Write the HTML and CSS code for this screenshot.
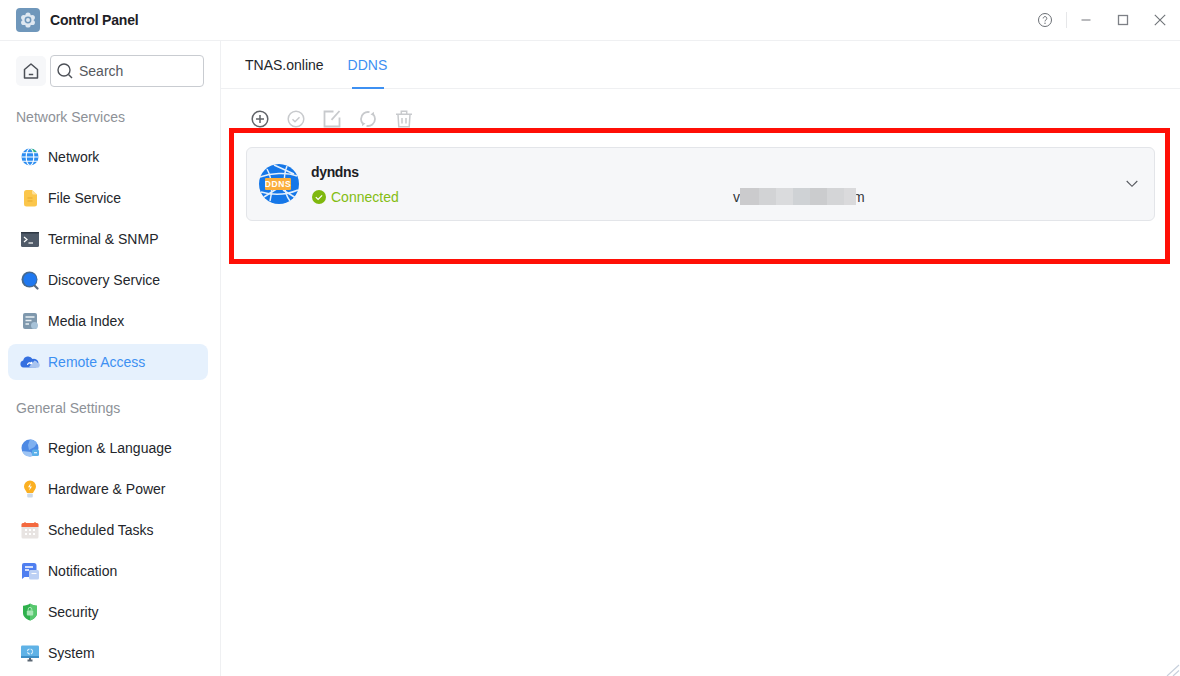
FILE: index.html
```html
<!DOCTYPE html>
<html lang="en">
<head>
<meta charset="utf-8">
<title>Control Panel</title>
<link rel="stylesheet" href="styles.css">
</head>
<body>
<div class="window">
  <header class="titlebar">
    <div class="app-logo">
      <svg viewBox="0 0 24 24" width="24" height="24"><rect width="24" height="24" rx="4" fill="#6f97bb"/><g fill="#dfe8f1"><circle cx="12" cy="12" r="5.500"/><circle cx="12" cy="7" r="2.600"/><circle cx="12" cy="17" r="2.600"/><circle cx="7.700" cy="9.500" r="2.600"/><circle cx="16.300" cy="9.500" r="2.600"/><circle cx="7.700" cy="14.500" r="2.600"/><circle cx="16.300" cy="14.500" r="2.600"/></g><circle cx="12" cy="12" r="2.700" fill="#dfe8f1" stroke="#6f97bb" stroke-width="1.500"/></svg>
    </div>
    <span class="app-title">Control Panel</span>
    <div class="win-controls">
      <svg class="ctl ctl-help" viewBox="0 0 16 16" width="16" height="16"><circle cx="8" cy="8" r="6.500" fill="none" stroke="#6b6f75" stroke-width="1"/><path d="M6.200 6.400a1.800 1.800 0 1 1 2.800 1.500c-.7.400-1 .8-1 1.500" fill="none" stroke="#6b6f75" stroke-width="1"/><circle cx="8" cy="11.300" r=".7" fill="#6b6f75"/></svg>
      <span class="ctl-sep"></span>
      <svg class="ctl" viewBox="0 0 12 12" width="12" height="12"><path d="M1.500 6h9" stroke="#8a8d92" stroke-width="1.200"/></svg>
      <svg class="ctl" viewBox="0 0 12 12" width="12" height="12"><rect x="1.500" y="1.500" width="9" height="9" fill="none" stroke="#7d8086" stroke-width="1.300"/></svg>
      <svg class="ctl" viewBox="0 0 12 12" width="12" height="12"><path d="M.8.800l10.400 10.400M11.200.800L.8 11.200" stroke="#6f7378" stroke-width="1.100"/></svg>
    </div>
  </header>

  <div class="body">
    <aside class="sidebar">
      <div class="search-row">
        <button class="home-btn" type="button">
          <svg viewBox="0 0 18 18" width="18" height="18"><path d="M2.500 7.500L9 2l6.500 5.500V16h-13z" fill="none" stroke="#4c5057" stroke-width="1.500" stroke-linejoin="round"/><path d="M6.800 12.500h4.400" stroke="#4c5057" stroke-width="1.500"/></svg>
        </button>
        <div class="search">
          <svg viewBox="0 0 18 18" width="18" height="18"><circle cx="8" cy="8" r="6" fill="none" stroke="#4c5057" stroke-width="1.400"/><path d="M12.500 12.500l3.500 3.500" stroke="#4c5057" stroke-width="1.400"/></svg>
          <span>Search</span>
        </div>
      </div>

      <div class="section-title first">Network Services</div>
      <nav class="nav">
        <a class="nav-item">
          <svg viewBox="0 0 20 20" width="20" height="20"><circle cx="10" cy="10" r="8.500" fill="#2b8cf0"/><path d="M10 1.500a8.500 8.500 0 0 1 6.500 3L13 6z" fill="#2fb67c"/><ellipse cx="10" cy="10" rx="3.800" ry="8.500" fill="none" stroke="#fff" stroke-width="1.100"/><path d="M1.500 10h17M3 5.800h14M3 14.200h14" stroke="#fff" stroke-width="1.100"/></svg>
          <span>Network</span>
        </a>
        <a class="nav-item">
          <svg viewBox="0 0 20 20" width="20" height="20"><path d="M4 4.500a2.500 2.500 0 0 1 2.500-2.500H12l5 4.500v9.500a2.500 2.500 0 0 1-2.500 2.500h-8A2.500 2.500 0 0 1 4 16z" fill="#fbc64b"/><path d="M12 2l5 4.500h-3.500A1.500 1.500 0 0 1 12 5z" fill="#fde09a"/><path d="M7.500 10h5M7.500 13h5" stroke="#e6a92c" stroke-width="1"/></svg>
          <span>File Service</span>
        </a>
        <a class="nav-item">
          <svg viewBox="0 0 20 20" width="20" height="20"><rect x="1" y="3" width="18" height="15" rx="1.500" fill="#4f5a68"/><rect x="1" y="3" width="18" height="1.500" fill="#2f3844"/><path d="M4 8l3 2.500L4 13" fill="none" stroke="#fff" stroke-width="1.200"/><path d="M8.500 14h4.500" stroke="#fff" stroke-width="1.200"/></svg>
          <span>Terminal &amp; SNMP</span>
        </a>
        <a class="nav-item">
          <svg viewBox="0 0 20 20" width="20" height="20"><path d="M14 15l3.500 3.500" stroke="#5d6b7c" stroke-width="2.200" stroke-linecap="round"/><circle cx="9.500" cy="9.500" r="8" fill="#46698f"/><circle cx="10" cy="9.500" r="6.600" fill="#1f78f0"/></svg>
          <span>Discovery Service</span>
        </a>
        <a class="nav-item">
          <svg viewBox="0 0 20 20" width="20" height="20"><rect x="3" y="2" width="14" height="16" rx="2" fill="#7f98ad"/><path d="M5.500 6h9M5.500 9.500h6M5.500 13h3.500" stroke="#e9eff4" stroke-width="1.300"/><circle cx="14.500" cy="14.500" r="3.500" fill="#a7c2d8"/></svg>
          <span>Media Index</span>
        </a>
        <a class="nav-item active">
          <svg viewBox="0 0 20 20" width="20" height="20"><path d="M3.500 15.500a3.500 3.500 0 0 1-.3-6.900A5 5 0 0 1 12.500 7a4.200 4.200 0 0 1 3 8.500z" fill="#3570e0"/><path d="M12 15.800h5a2.500 2.500 0 0 0 .5-5 3.800 3.800 0 0 0-3-2.400L9 15z" fill="#a9c4ef"/><path d="M7.500 13a2.500 2.500 0 0 1 4.300-1.500M11.800 9.800v2h-2" fill="none" stroke="#fff" stroke-width="1.100"/></svg>
          <span>Remote Access</span>
        </a>
      </nav>

      <div class="section-title">General Settings</div>
      <nav class="nav">
        <a class="nav-item">
          <svg viewBox="0 0 20 20" width="20" height="20"><circle cx="10" cy="10" r="8.500" fill="#4d89e4"/><path d="M10 1.500a8.500 8.500 0 0 1 7 3.700L14.500 9 9 12l-1-5z" fill="#7fb0f0"/><path d="M2 13a8.500 8.500 0 0 0 8 5.500c1 0 2-.2 3-.5l-2-4z" fill="#9dc4f4"/><rect x="12" y="11.500" width="7" height="6.500" rx="1.500" fill="#5bb0ea"/><path d="M14 14.700h3" stroke="#e8f3fc" stroke-width="1.200"/></svg>
          <span>Region &amp; Language</span>
        </a>
        <a class="nav-item">
          <svg viewBox="0 0 20 20" width="20" height="20"><path d="M10 1.500a6 6 0 0 1 6 6c0 2.600-2 4-3 6.500H7c-1-2.500-3-3.900-3-6.500a6 6 0 0 1 6-6z" fill="#fbb022"/><path d="M10.800 4L8 8.300h2l-.8 3.200L12 7.500h-2z" fill="#fff"/><rect x="7.200" y="14.500" width="5.600" height="4" rx="1" fill="#cdd9e6"/></svg>
          <span>Hardware &amp; Power</span>
        </a>
        <a class="nav-item">
          <svg viewBox="0 0 20 20" width="20" height="20"><rect x="1.500" y="3" width="17" height="15.500" rx="1.500" fill="#e8e4e2"/><path d="M1.500 4.500A1.500 1.500 0 0 1 3 3h14a1.500 1.500 0 0 1 1.500 1.500V7h-17z" fill="#f4693f"/><path d="M5 2v2M15 2v2" stroke="#f4693f" stroke-width="1.200"/><path d="M5 10h2M9 10h2M13 10h2M5 14h2M9 14h2M13 14h2" stroke="#fff" stroke-width="1.800"/></svg>
          <span>Scheduled Tasks</span>
        </a>
        <a class="nav-item">
          <svg viewBox="0 0 20 20" width="20" height="20"><path d="M4 2h10a2.500 2.500 0 0 1 2.500 2.500V16H4.500L2 18V4a2 2 0 0 1 2-2z" fill="#4f7ff0"/><path d="M5 6h8M5 9h4" stroke="#fff" stroke-width="1.300"/><rect x="9" y="9" width="10" height="9.500" rx="1.500" fill="#bcd0f4"/><path d="M11.500 12.500h5" stroke="#fff" stroke-width="1.100"/></svg>
          <span>Notification</span>
        </a>
        <a class="nav-item">
          <svg viewBox="0 0 20 20" width="20" height="20"><path d="M10 1.500c2 1.400 4.300 2.100 7 2.200v7.300c0 3.500-3 6-7 7.500-4-1.500-7-4-7-7.500V3.700c2.700-.1 5-.8 7-2.200z" fill="#2fb14c"/><path d="M10 1.500c2 1.400 4.300 2.100 7 2.200v7.300c0 3.500-3 6-7 7.500z" fill="#58c86e"/><rect x="6.800" y="8.500" width="6.400" height="5" rx="1" fill="#a9e6b6"/><path d="M8.200 8.500V7.200a1.800 1.800 0 0 1 3.600 0v1.300" fill="none" stroke="#a9e6b6" stroke-width="1"/></svg>
          <span>Security</span>
        </a>
        <a class="nav-item">
          <svg viewBox="0 0 20 20" width="20" height="20"><rect x="1" y="2.500" width="18" height="12.500" rx="1.200" fill="#5fb2e6"/><rect x="1" y="13" width="18" height="2" fill="#3d8ec6"/><path d="M7.500 17.500h5" stroke="#5b6672" stroke-width="2"/><path d="M9 15h2v2H9z" fill="#5b6672"/><circle cx="10" cy="8.500" r="2.600" fill="none" stroke="#dff1fb" stroke-width="1.100" stroke-dasharray="3 1.200"/></svg>
          <span>System</span>
        </a>
      </nav>
    </aside>

    <main class="content">
      <div class="tabs">
        <span class="tab">TNAS.online</span>
        <span class="tab current">DDNS</span>
      </div>

      <div class="toolbar">
        <svg viewBox="0 0 18 18" width="18" height="18"><circle cx="9" cy="9" r="7.800" fill="none" stroke="#606368" stroke-width="1.500"/><path d="M9 5v8M5 9h8" stroke="#606368" stroke-width="1.500"/></svg>
        <svg viewBox="0 0 18 18" width="18" height="18"><circle cx="9" cy="9" r="7.800" fill="none" stroke="#c8cacd" stroke-width="1.500"/><path d="M5.500 9.200l2.500 2.500 4.500-4.500" fill="none" stroke="#c8cacd" stroke-width="1.500"/></svg>
        <svg viewBox="0 0 18 18" width="18" height="18"><path d="M10.500 1.500H1.500v15h15V7.500" fill="none" stroke="#c8cacd" stroke-width="1.800"/><path d="M16.500 1L8.500 9.800" stroke="#c8cacd" stroke-width="1.800"/></svg>
        <svg viewBox="0 0 18 18" width="18" height="18"><path d="M10.500 2.200A7 7 0 0 0 2 9c0 1.800.7 3.400 1.800 4.600M7.500 15.800A7 7 0 0 0 16 9c0-1.800-.7-3.400-1.800-4.600" fill="none" stroke="#c8cacd" stroke-width="1.800"/><path d="M11.500 4.500L14.800 1.800l.4 4.200zM6.500 13.500L3.200 16.200l-.4-4.200z" fill="#c8cacd"/></svg>
        <svg viewBox="0 0 18 18" width="18" height="18"><path d="M1 4.200h16M6.300 4V1.200h5.400V4M3 4.500l.8 12.300h10.400l.8-12.300M7 8v5.500M11 8v5.500" fill="none" stroke="#c8cacd" stroke-width="1.500"/></svg>
      </div>

      <section class="card">
        <svg class="ddns-logo" viewBox="0 0 40 40" width="40" height="40"><circle cx="20" cy="20" r="20" fill="#1577e8"/><path d="M8 5c5 9 6 22 3 32M28 2c-4 10-4 26 3 35M1 13c11-4 27-5 37-1M2 28c11 3 25 3 37-2M15 1l20 9M5 33l14-9M24 26l13 8" fill="none" stroke="#e3effc" stroke-width="1.500"/><rect x="6" y="14" width="26" height="12" rx="1" fill="#fbae3c"/><text x="19" y="23.200" class="ddns-text" text-anchor="middle">DDNS</text></svg>
        <div class="card-info">
          <div class="card-name">dyndns</div>
          <div class="card-row">
            <div class="status">
              <svg viewBox="0 0 14 14" width="14" height="14"><circle cx="7" cy="7" r="7" fill="#7fb80e"/><path d="M3.800 7.200l2.300 2.300 4-4.200" fill="none" stroke="#fff" stroke-width="1.200"/></svg>
              <span>Connected</span>
            </div>
            <div class="address"><span>v</span><span class="blur"><i class="b1"></i><i class="b2"></i><i class="b3"></i><i class="b4"></i><i class="b5"></i><i class="b6"></i><i class="b7"></i></span><span class="addr-end">m</span></div>
          </div>
        </div>
        <svg class="chevron" viewBox="0 0 12 8" width="12" height="8"><path d="M.7 1l5.300 5.300L11.300 1" fill="none" stroke="#55585e" stroke-width="1.100"/></svg>
      </section>
    </main>
  </div>

  <div class="highlight"></div>
  <svg class="grip" viewBox="0 0 14 12" width="14" height="12"><path d="M1 12L13 1M7 12l6-5.500" stroke="#c7d0dc" stroke-width="1.200"/></svg>
</div>
</body>
</html>
```

FILE: styles.css
```css
* { box-sizing: border-box; }
html, body { margin: 0; height: 100%; background: #fff; }
body { font-family: "Liberation Sans", Arial, sans-serif; font-size: 14px; color: #23262b; overflow: hidden; }
svg { display: block; flex: none; }

.window { position: relative; width: 1180px; height: 676px; display: flex; flex-direction: column; background: #fff; overflow: hidden; }

.titlebar { height: 41px; flex: none; display: flex; align-items: center; padding: 0 14px 1px 16px; border-bottom: 1px solid #eff0f2; }
.app-logo { width: 24px; height: 24px; margin-right: 10px; }
.app-title { font-weight: 700; font-size: 14px; color: #1d2025; letter-spacing: -0.2px; }
.win-controls { margin-left: auto; display: flex; align-items: center; gap: 25px; }
.ctl-help { margin-right: -12px; }
.ctl-sep { width: 1px; height: 16px; background: #e6e7e9; margin-right: -12px; }

.body { flex: 1; display: flex; min-height: 0; }

.sidebar { width: 221px; flex: none; border-right: 1px solid #eff0f2; padding: 14px 12px 0 8px; }
.search-row { display: flex; align-items: center; gap: 4px; padding-left: 8px; height: 32px; }
.home-btn { width: 30px; height: 30px; border: 0; padding: 0; background: #f6f7f9; border-radius: 5px; display: flex; align-items: center; justify-content: center; }
.search { width: 154px; height: 32px; border: 1px solid #c9ccd1; border-radius: 4px; display: flex; align-items: center; gap: 5px; padding-left: 5px; color: #55585e; }

.section-title { height: 20px; line-height: 20px; color: #8d9197; padding-left: 8px; margin: 18px 0 12px; }
.section-title.first { margin-top: 20px; }

.nav { display: flex; flex-direction: column; gap: 5px; }
.nav-item { height: 36px; display: flex; align-items: center; gap: 8px; padding-left: 12px; border-radius: 8px; color: #23262b; }
.nav-item.active { background: #e6f1fd; color: #3d90f2; }

.content { flex: 1; min-width: 0; padding: 0; }
.tabs { height: 48px; border-bottom: 1px solid #eff0f2; display: flex; gap: 24px; padding-left: 24px; }
.tab { position: relative; height: 48px; line-height: 49px; color: #23262b; }
.tab.current { color: #3d90f2; }
.tab.current::after { content: ""; position: absolute; left: 4px; right: 3px; bottom: 0; height: 2px; background: #3d90f2; }

.toolbar { display: flex; gap: 18px; padding: 21px 0 0 30px; height: 58px; }

.card { margin-left: 25px; width: 909px; height: 74px; display: flex; align-items: center; background: #f6f7f9; border: 1px solid #e3e5e9; border-radius: 6px; padding: 0 16px 0 12px; }
.ddns-logo { margin-right: 12px; }
.ddns-text { font-family: "Liberation Sans", Arial, sans-serif; font-size: 8.500px; font-weight: 700; fill: #fff; letter-spacing: .6px; }
.card-info { flex: 1; display: flex; flex-direction: column; gap: 9px; }
.card-name { font-weight: 700; color: #1d2025; height: 16px; line-height: 16px; letter-spacing: -0.35px; }
.card-row { display: flex; align-items: center; height: 16px; }
.status { width: 421px; margin-left: 1px; display: flex; align-items: center; gap: 5px; color: #84bd12; }
.address { display: flex; align-items: center; color: #33363b; }
.blur { position: relative; z-index: 1; display: flex; width: 116px; height: 17px; }
.addr-end { margin-left: -3px; }
.blur i { display: block; height: 100%; }
.b1 { width: 19px; background: #cbcbcd; }
.b2 { width: 17px; background: #d2d3d5; }
.b3 { width: 17px; background: #dadbdd; }
.b4 { width: 17px; background: #cfd2d5; }
.b5 { width: 17px; background: #cbcccE; }
.b6 { width: 17px; background: #d4d5d7; }
.b7 { width: 12px; background: #dadadc; }
.chevron { flex: none; }

.highlight { position: absolute; left: 229px; top: 128px; width: 941px; height: 136px; border: 5px solid #ff0f06; }
.grip { position: absolute; right: 0; bottom: 0; }
```
